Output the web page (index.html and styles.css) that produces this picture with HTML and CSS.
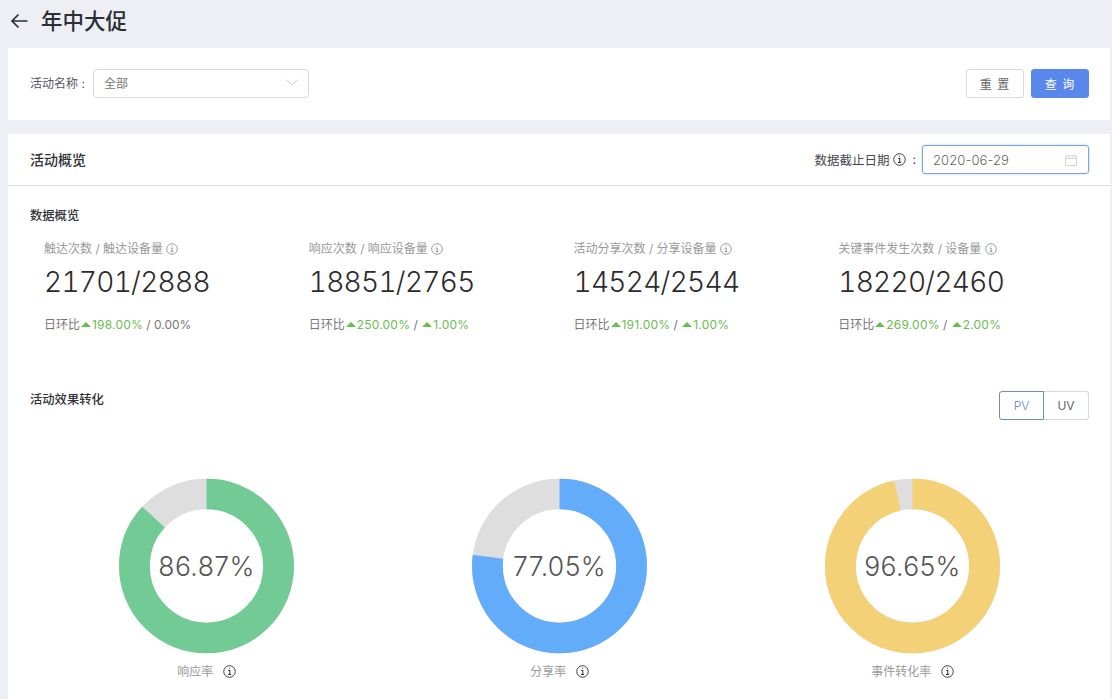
FILE: index.html
```html
<!DOCTYPE html>
<html lang="zh-CN">
<head>
  <meta charset="UTF-8">
  <meta name="viewport" content="width=device-width, initial-scale=1.0">
  <title>年中大促</title>
  <link rel="stylesheet" href="styles.css">
</head>
<body>
  <header class="page-header">
    <svg class="back-icon" width="18" height="16" viewBox="0 0 18 16"><path d="M17.500 8H2M8.500 1.500 2 8l6.500 6.500" fill="none" stroke="#2b2f36" stroke-width="1.700"/></svg>
    <h1>年中大促</h1>
  </header>

  <section class="filter-card">
    <div class="filter-field">
      <label>活动名称 :</label>
      <div class="select">
        <span>全部</span>
        <svg width="12" height="7" viewBox="0 0 12 7"><path d="M.7.7 6 6l5.300-5.300" fill="none" stroke="#c9ccd1" stroke-width="1"/></svg>
      </div>
    </div>
    <div class="filter-actions">
      <button class="btn">重 置</button>
      <button class="btn btn-primary">查 询</button>
    </div>
  </section>

  <section class="main-card">
    <div class="card-head">
      <h2>活动概览</h2>
      <div class="date-field">
        <span class="date-label">数据截止日期</span>
        <svg class="info info-dark" viewBox="0 0 14 14"><use href="#info-glyph"/></svg>
        <span class="date-colon">:</span>
        <div class="date-input">
          <span>2020-06-29</span>
          <svg width="12" height="12" viewBox="0 0 12 12"><path d="M.5 2h11v9.500H.5zM.5 4.500h11M3 .5V3M9 .5V3" fill="none" stroke="#cfd2d6" stroke-width="1"/></svg>
        </div>
      </div>
    </div>

    <div class="card-body">
      <h3>数据概览</h3>
      <div class="stats">
        <div class="stat">
          <div class="stat-title">触达次数 / 触达设备量 <svg class="info" viewBox="0 0 14 14"><use href="#info-glyph"/></svg></div>
          <div class="stat-value">21701<i>/</i>2888</div>
          <div class="stat-ratio">日环比<b class="up"></b><em>198.00%</em> / 0.00%</div>
        </div>
        <div class="stat">
          <div class="stat-title">响应次数 / 响应设备量 <svg class="info" viewBox="0 0 14 14"><use href="#info-glyph"/></svg></div>
          <div class="stat-value">18851<i>/</i>2765</div>
          <div class="stat-ratio">日环比<b class="up"></b><em>250.00%</em> / <b class="up"></b><em>1.00%</em></div>
        </div>
        <div class="stat">
          <div class="stat-title">活动分享次数 / 分享设备量 <svg class="info" viewBox="0 0 14 14"><use href="#info-glyph"/></svg></div>
          <div class="stat-value">14524<i>/</i>2544</div>
          <div class="stat-ratio">日环比<b class="up"></b><em>191.00%</em> / <b class="up"></b><em>1.00%</em></div>
        </div>
        <div class="stat">
          <div class="stat-title">关键事件发生次数 / 设备量 <svg class="info" viewBox="0 0 14 14"><use href="#info-glyph"/></svg></div>
          <div class="stat-value">18220<i>/</i>2460</div>
          <div class="stat-ratio">日环比<b class="up"></b><em>269.00%</em> / <b class="up"></b><em>2.00%</em></div>
        </div>
      </div>

      <div class="convert-head">
        <h3>活动效果转化</h3>
        <div class="toggle">
          <span class="toggle-item active">PV</span>
          <span class="toggle-item">UV</span>
        </div>
      </div>

      <div class="charts">
        <div class="chart">
          <div class="donut">
            <svg viewBox="0 0 176 176"><circle class="ring" cx="88" cy="88" r="72.500"/><circle class="arc green" cx="88" cy="88" r="72.500" pathLength="100" stroke-dasharray="86.87 100"/></svg>
            <span class="donut-text">86.87%</span>
          </div>
          <div class="chart-label">响应率 <svg class="info info-dark" viewBox="0 0 14 14"><use href="#info-glyph"/></svg></div>
        </div>
        <div class="chart">
          <div class="donut">
            <svg viewBox="0 0 176 176"><circle class="ring" cx="88" cy="88" r="72.500"/><circle class="arc blue" cx="88" cy="88" r="72.500" pathLength="100" stroke-dasharray="77.05 100"/></svg>
            <span class="donut-text">77.05%</span>
          </div>
          <div class="chart-label">分享率 <svg class="info info-dark" viewBox="0 0 14 14"><use href="#info-glyph"/></svg></div>
        </div>
        <div class="chart">
          <div class="donut">
            <svg viewBox="0 0 176 176"><circle class="ring" cx="88" cy="88" r="72.500"/><circle class="arc yellow" cx="88" cy="88" r="72.500" pathLength="100" stroke-dasharray="96.65 100"/></svg>
            <span class="donut-text">96.65%</span>
          </div>
          <div class="chart-label">事件转化率 <svg class="info info-dark" viewBox="0 0 14 14"><use href="#info-glyph"/></svg></div>
        </div>
      </div>
    </div>
  </section>

  <svg class="defs" width="0" height="0">
    <symbol id="info-glyph" viewBox="0 0 14 14">
      <circle cx="7" cy="7" r="6.200" fill="none" stroke="currentColor" stroke-width="1"/>
      <path d="M5.600 6h1.700v4M5.300 10.200h3.400M6.500 3.600h1.100" fill="none" stroke="currentColor" stroke-width="1.100"/>
    </symbol>
  </svg>
</body>
</html>
```

FILE: styles.css
```css
* {
  box-sizing: border-box;
}
html, body {
  height: 699px;
  overflow: hidden;
}
body {
  margin: 0;
  padding: 0 2px 0 8px;
  background: #eeeff5;
  font-family: Inter, "Noto Sans CJK SC", sans-serif;
  color: #33363b;
}
h1, h2, h3 {
  margin: 0;
}
.page-header {
  height: 48px;
  padding: 0 0 6px 2px;
  display: flex;
  align-items: center;
  gap: 13px;
}
.page-header h1 {
  font-size: 21.500px;
  font-weight: 500;
  color: #2b2f36;
  line-height: 28px;
}
.filter-card {
  height: 72px;
  padding: 0 21px 2px 22px;
  background: #fff;
  display: flex;
  justify-content: space-between;
  align-items: center;
}
.filter-field {
  display: flex;
  align-items: center;
  font-size: 12px;
  color: #55585d;
}
.filter-field label {
  width: 63px;
  padding-bottom: 1px;
}
.select {
  width: 216px;
  height: 29px;
  padding: 0 10px 1px;
  border: 1px solid #d9d9d9;
  border-radius: 4px;
  display: flex;
  justify-content: space-between;
  align-items: center;
  color: #777;
  font-size: 12px;
}
.filter-actions {
  display: flex;
  gap: 7px;
}
.btn {
  width: 58px;
  height: 29px;
  padding: 0;
  border: 1px solid #d9d9d9;
  border-radius: 3px;
  background: #fff;
  color: #666;
  font-family: inherit;
  font-size: 12px;
  letter-spacing: 1px;
}
.btn-primary {
  border-color: #5a87ec;
  background: #5a87ec;
  color: #fff;
}
.main-card {
  height: 565px;
  margin-top: 14px;
  background: #fff;
}
.card-head {
  height: 52px;
  padding: 0 21px 0 22px;
  border-bottom: 1px solid #dcdcdc;
  display: flex;
  justify-content: space-between;
  align-items: center;
}
.card-head h2 {
  font-size: 14px;
  font-weight: 500;
  color: #2f3237;
  padding-bottom: 2px;
}
.date-field {
  display: flex;
  align-items: center;
  font-size: 12.500px;
  color: #44474c;
}
.date-colon {
  margin: 0 6px 0 6px;
}
.date-field .info {
  margin-left: 4px;
  width: 13px;
  height: 13px;
}
.date-input {
  width: 167px;
  height: 29px;
  padding: 0 11px 0 10px;
  border: 1px solid #7da0ee;
  border-radius: 3px;
  box-shadow: 0 0 2px rgba(90, 135, 236, 0.5);
  display: flex;
  justify-content: space-between;
  align-items: center;
  color: #666;
  font-size: 13px;
  font-weight: 300;
  letter-spacing: 0.1px;
}
.card-body {
  padding: 22px 21px 0 22px;
}
.card-body h3 {
  font-size: 12.300px;
  font-weight: 500;
  line-height: 16px;
  color: #2f3237;
}
.info {
  width: 12px;
  height: 12px;
  color: #8d8f93;
  vertical-align: -2px;
}
.info-dark {
  color: #2f3237;
}
.stats {
  margin-top: 17px;
  height: 147px;
  display: grid;
  grid-template-columns: repeat(4, 1fr);
}
.stat {
  padding-left: 14px;
}
.stat-title {
  font-size: 12px;
  line-height: 16px;
  color: #999;
}
.stat-value {
  margin-top: 7px;
  font-size: 28px;
  font-weight: 300;
  font-variant-numeric: tabular-nums;
  letter-spacing: -0.7px;
  line-height: 36px;
  color: #2b2b2b;
  white-space: nowrap;
}
.stat-value i {
  font-style: normal;
}
.stat-ratio {
  margin-top: 17px;
  font-size: 12px;
  line-height: 16px;
  color: #777;
  white-space: nowrap;
}
.stat-ratio em {
  font-style: normal;
  color: #6cbb4f;
  letter-spacing: 0.2px;
}
.up {
  display: inline-block;
  width: 0;
  height: 0;
  margin: 0 1px 2px 1px;
  border-left: 5px solid transparent;
  border-right: 5px solid transparent;
  border-bottom: 5px solid #6cbb4f;
}
.convert-head {
  height: 90px;
  display: flex;
  justify-content: space-between;
  align-items: flex-start;
}
.convert-head h3 {
  margin-top: 4px;
}
.toggle {
  display: flex;
  margin-top: 3px;
  height: 29px;
  font-size: 12px;
}
.toggle-item {
  width: 45px;
  display: flex;
  justify-content: center;
  align-items: center;
  border: 1px solid #d9d9d9;
  color: #666;
}
.toggle-item:first-child {
  border-radius: 3px 0 0 3px;
}
.toggle-item:last-child {
  border-left: 0;
  border-radius: 0 3px 3px 0;
}
.toggle-item.active {
  border-color: #6b8fb8;
  color: #5a87c8;
  font-weight: 300;
}
.charts {
  display: grid;
  grid-template-columns: repeat(3, 1fr);
}
.chart {
  display: flex;
  flex-direction: column;
  align-items: center;
}
.donut {
  position: relative;
  width: 175px;
  height: 176px;
}
.donut svg {
  display: block;
  width: 175px;
  height: 176px;
  transform: rotate(-90deg);
}
.ring, .arc {
  fill: none;
  stroke-width: 31px;
}
.ring {
  stroke: #dedede;
}
.green {
  stroke: #72cb95;
}
.blue {
  stroke: #62acf9;
}
.yellow {
  stroke: #f4d077;
}
.donut-text {
  position: absolute;
  inset: 0;
  display: flex;
  justify-content: center;
  align-items: center;
  font-size: 26.500px;
  font-weight: 300;
  letter-spacing: 0.4px;
  color: #555;
}
.chart-label {
  margin-top: 10px;
  font-size: 12px;
  line-height: 16px;
  color: #999;
}
.chart-label .info {
  margin-left: 6px;
  width: 13px;
  height: 13px;
}
.defs {
  position: absolute;
}
```
